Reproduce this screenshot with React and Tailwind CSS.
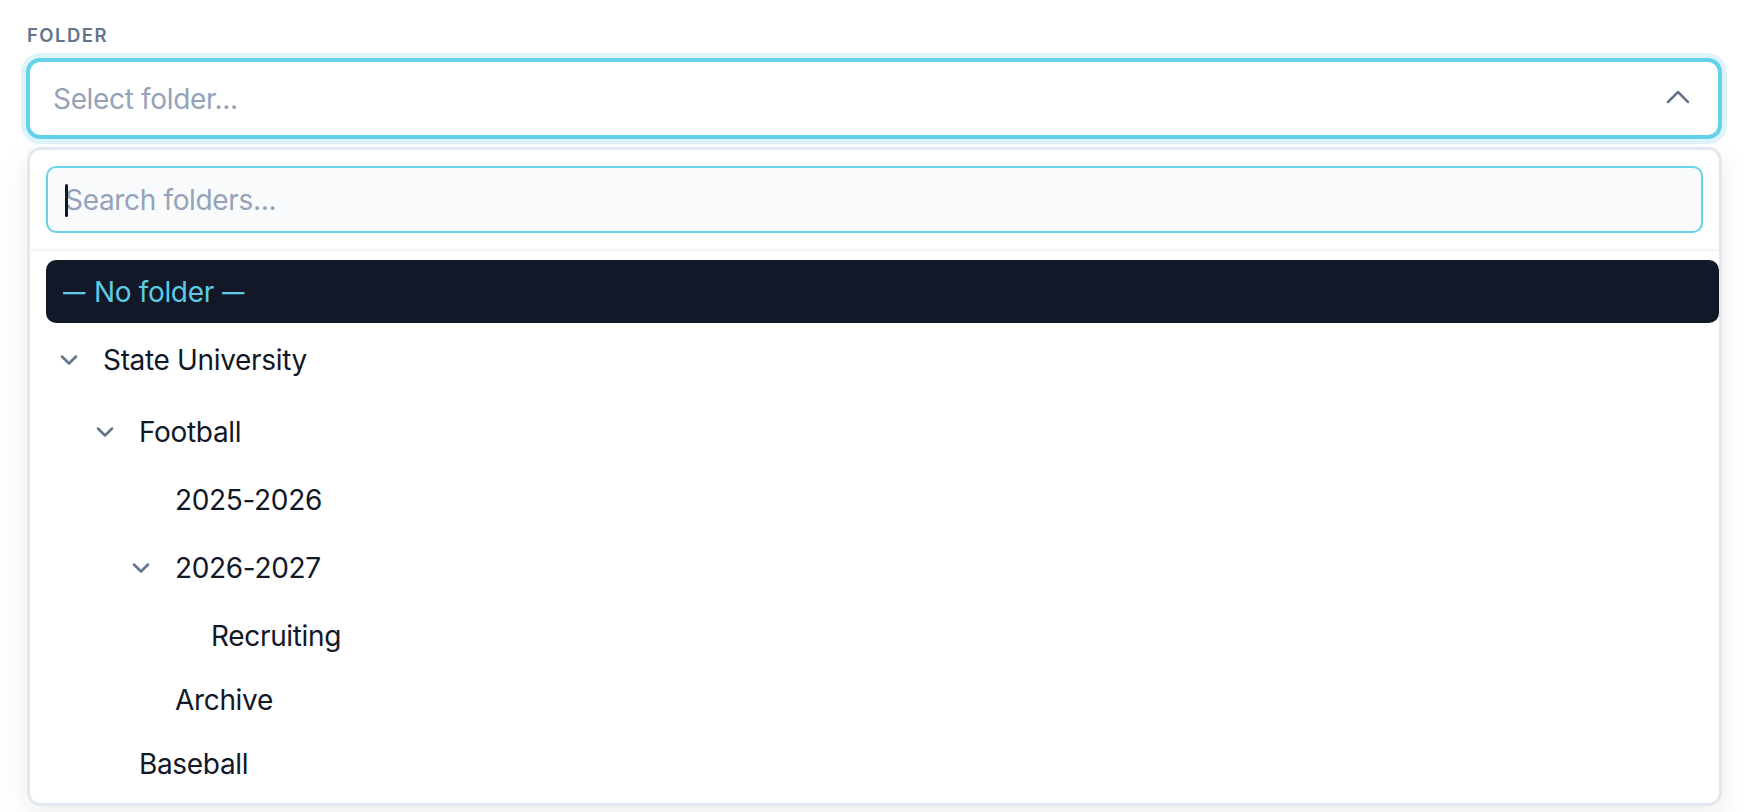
import React from "react";

const ChevronDown = () => (
  <svg width="28" height="28" viewBox="0 0 24 24" fill="none" stroke="#64748b" strokeWidth="2.2" strokeLinecap="round" strokeLinejoin="round">
    <path d="m6 9 6 6 6-6" />
  </svg>
);

const ChevronUp = () => (
  <svg width="32" height="32" viewBox="0 0 24 24" fill="none" stroke="#64748b" strokeWidth="1.9" strokeLinecap="round" strokeLinejoin="round">
    <path d="m4.5 15.75 7.5-7.5 7.5 7.5" />
  </svg>
);

const indent = {
  0: "pl-[9px]",
  1: "pl-[45px]",
  2: "pl-[81px]",
  3: "pl-[117px]",
};

const items = [
  { label: "State University", level: 0, open: true },
  { label: "Football", level: 1, open: true },
  { label: "2025-2026", level: 2 },
  { label: "2026-2027", level: 2, open: true },
  { label: "Recruiting", level: 3 },
  { label: "Archive", level: 2 },
  { label: "Baseball", level: 1 },
];

export default function App() {
  return (
    <div
      className="min-h-[812px] w-full bg-white pl-[26px] pt-[22px]"
      style={{ fontFamily: "Inter, 'Noto Sans', sans-serif" }}
    >
      <div className="h-[26px] leading-[26px] text-[18.5px] font-semibold tracking-[0.08em] text-[#64748b] pl-[1px]">
        FOLDER
      </div>
      <div className="mt-[10px] w-[1696px]">
        <div className="flex h-[81px] items-center justify-between rounded-[14px] border-4 border-[#64d2e9] bg-white pl-[23px] pr-[24px] shadow-[0_0_0_5px_#dff4fa]">
          <span className="text-[28px] leading-[40px] tracking-[-0.012em] text-[#94a3b8]">Select folder...</span>
          <span className="-mt-[3px]">
            <ChevronUp />
          </span>
        </div>
        <div className="mt-[8px] ml-[1px] w-[1695px] rounded-[14px] border-[3px] border-[#e2e8f0] bg-white shadow-[0_10px_30px_rgba(15,23,42,0.08)]">
          <div className="border-b-2 border-[#f1f5f9] px-[16px] pt-[16px] pb-[16px]">
            <div className="relative flex h-[67px] items-center rounded-[10px] border-2 border-[#6bd3e8] bg-[#f8fafc] pl-[17px]">
              <span className="absolute left-[17px] top-[16px] h-[33px] w-[3px] rounded-sm bg-[#111827]" />
              <span className="text-[28px] leading-[40px] tracking-[-0.012em] text-[#94a3b8]">Search folders...</span>
            </div>
          </div>
          <div className="flex flex-col gap-[1px] pl-[16px] pt-[9px] pb-[8px]">
            <div className="flex h-[63px] items-center rounded-[10px] bg-[#121827] pl-[17px] text-[28px] leading-[40px] tracking-[-0.012em] text-[#5ccbe3]">
              <span className="inline-block w-[28px] origin-left scale-x-[0.8]">—</span>
              <span className="ml-[3px]">No folder</span>
              <span className="ml-[8px] inline-block w-[28px] origin-left scale-x-[0.8]">—</span>
            </div>
            {items.map((it) => (
              <div
                key={it.label}
                className={`flex items-center ${it.open ? "h-[71px]" : "h-[63px]"} ${indent[it.level]}`}
              >
                <span className="flex h-[28px] w-[28px] items-center justify-center">
                  {it.open ? <ChevronDown /> : null}
                </span>
                <span className="ml-[20px] text-[28px] leading-[40px] tracking-[-0.012em] text-[#111827]">{it.label}</span>
              </div>
            ))}
          </div>
        </div>
      </div>
    </div>
  );
}
